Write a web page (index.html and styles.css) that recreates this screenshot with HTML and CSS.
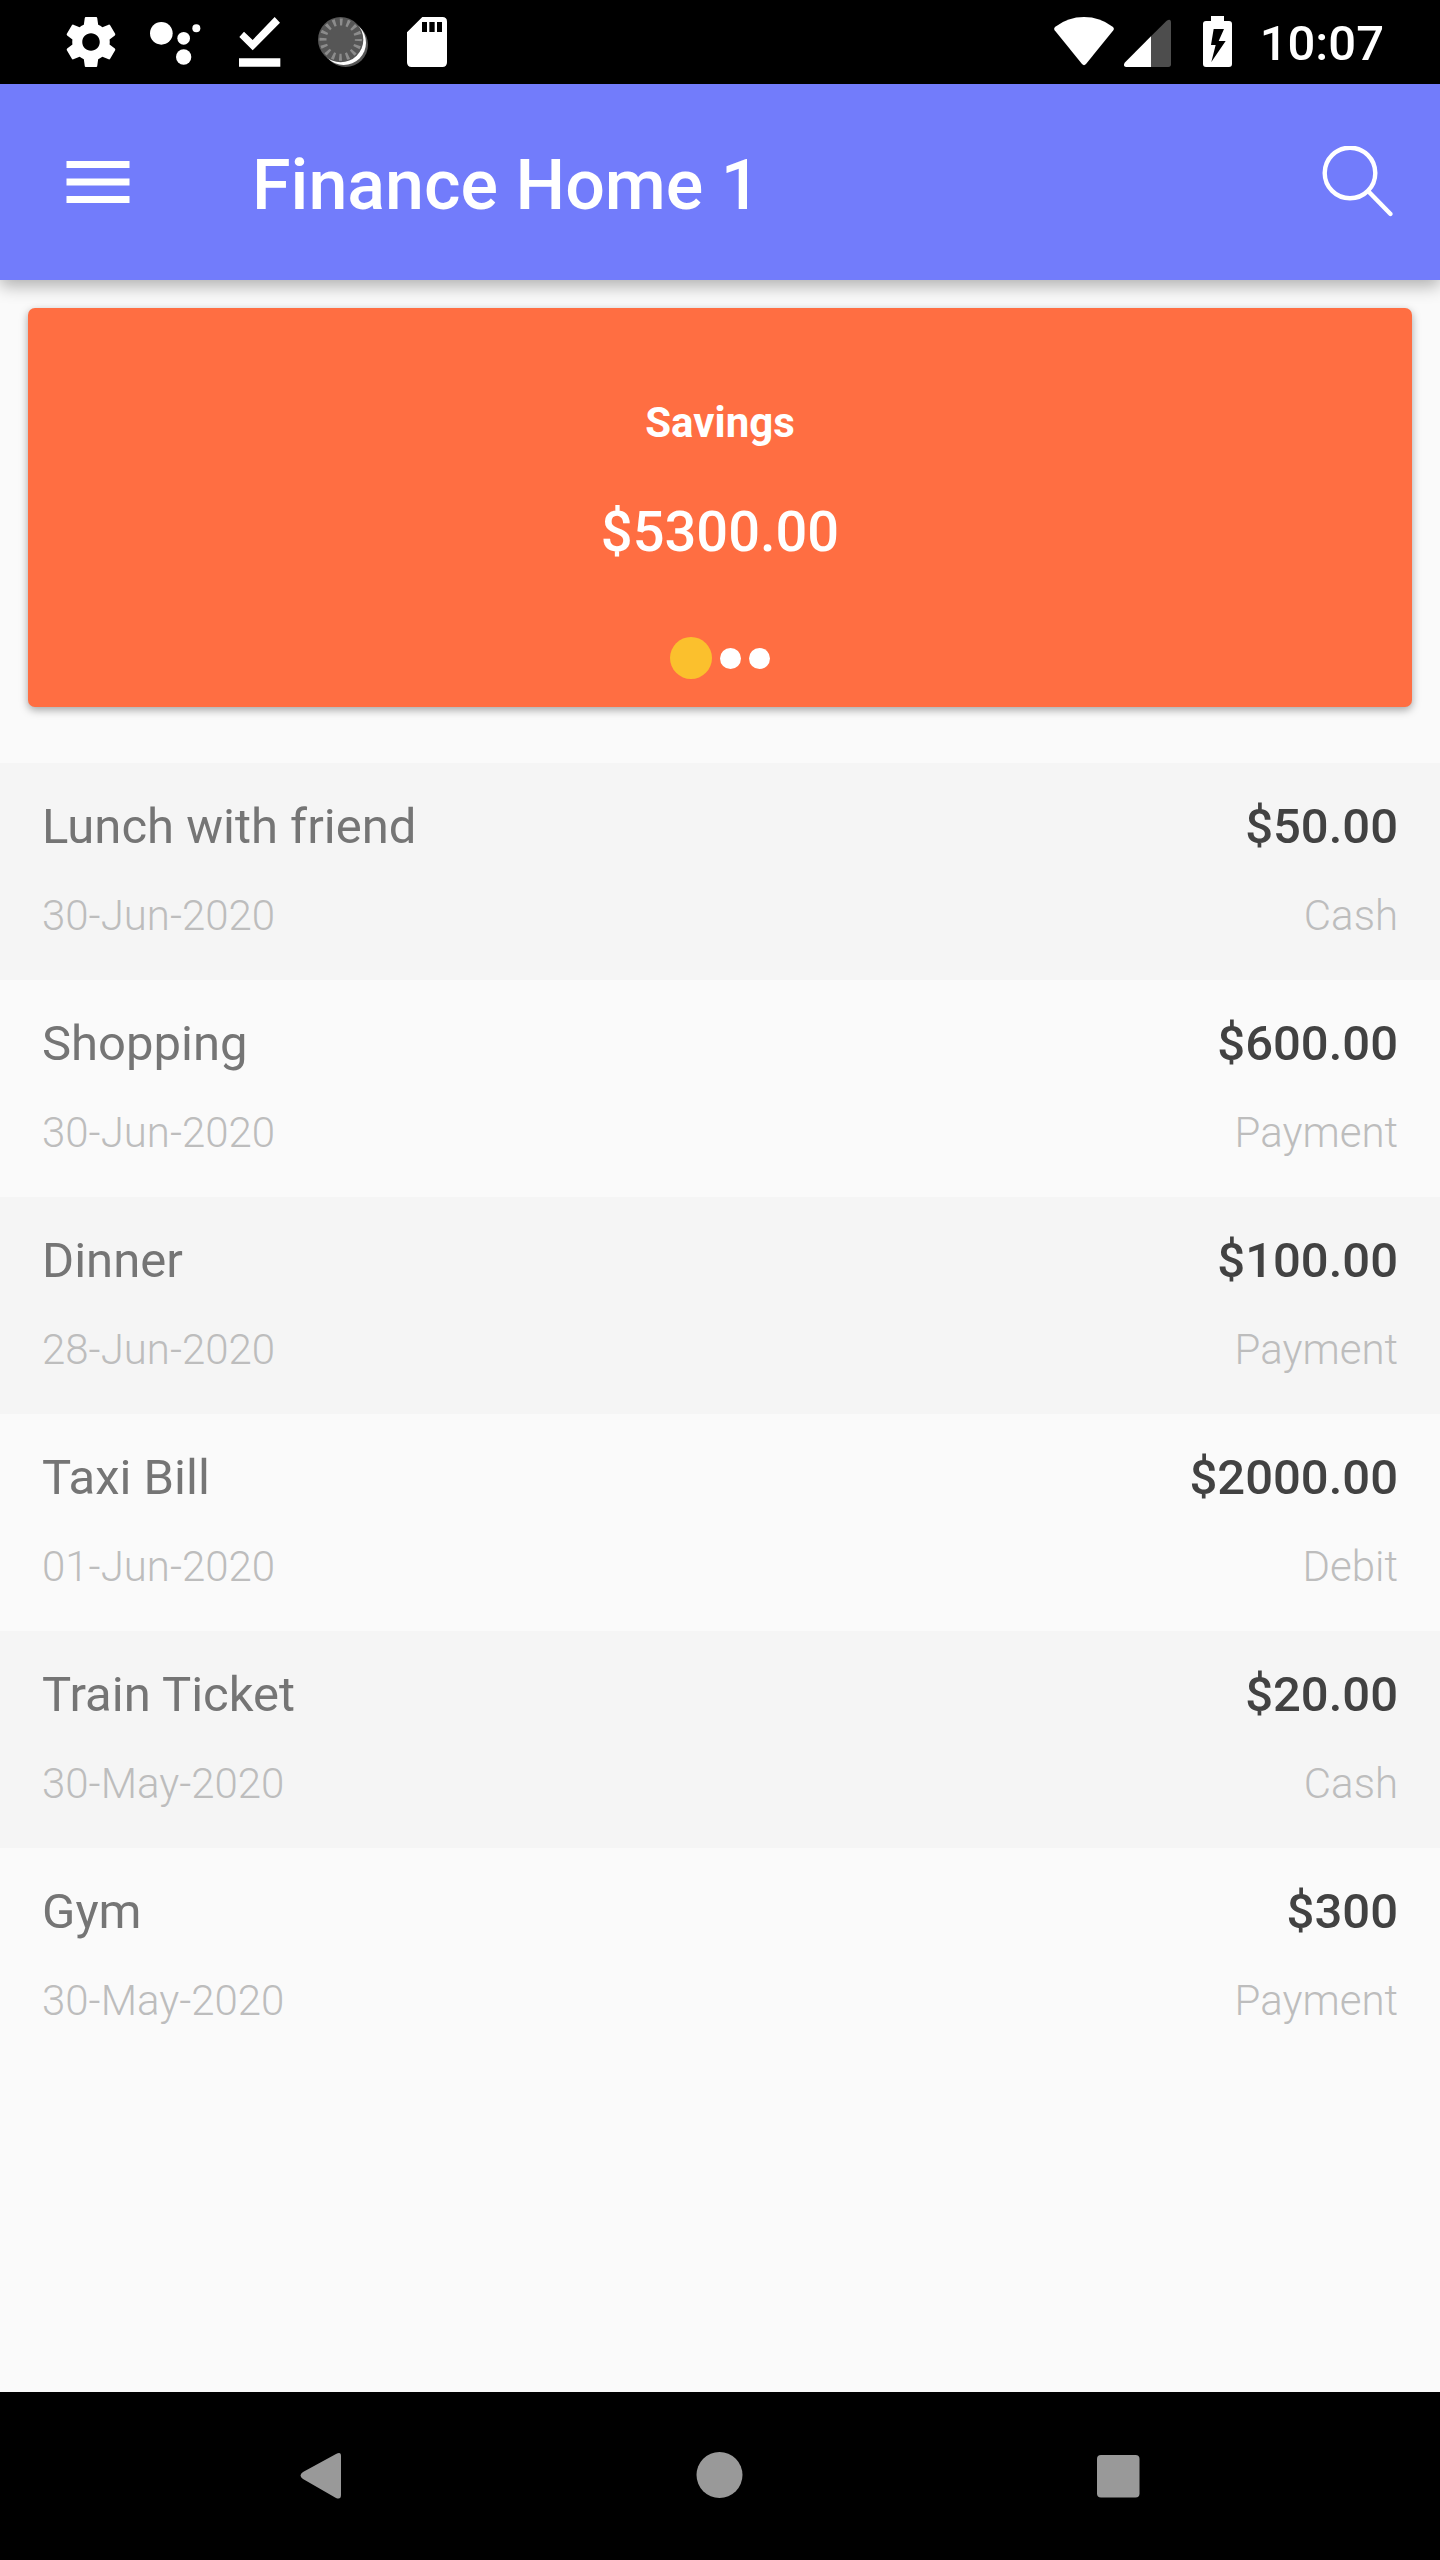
FILE: index.html
```html
<!DOCTYPE html>
<html lang="en">
<head>
<meta charset="utf-8">
<meta name="viewport" content="width=device-width, initial-scale=1">
<title>Finance Home 1</title>
<link rel="stylesheet" href="styles.css">
</head>
<body>
<div class="status-bar">
  <div class="status-group status-group-left">
    <svg class="status-icon" viewBox="0 0 24 24" aria-hidden="true"><path fill="#fff" d="M19.43 12.98c.04-.32.07-.64.07-.98s-.03-.66-.07-.98l2.11-1.65c.19-.15.24-.42.12-.64l-2-3.46c-.12-.22-.39-.3-.61-.22l-2.49 1c-.52-.4-1.08-.73-1.69-.98l-.38-2.65C14.46 2.18 14.25 2 14 2h-4c-.25 0-.46.18-.49.42l-.38 2.65c-.61.25-1.17.59-1.69.98l-2.49-1c-.23-.09-.49 0-.61.22l-2 3.46c-.13.22-.07.49.12.64l2.11 1.65c-.04.32-.07.65-.07.98s.03.66.07.98l-2.11 1.65c-.19.15-.24.42-.12.64l2 3.46c.12.22.39.3.61.22l2.49-1c.52.4 1.08.73 1.69.98l.38 2.65c.03.24.24.42.49.42h4c.25 0 .46-.18.49-.42l.38-2.65c.61-.25 1.17-.59 1.69-.98l2.49 1c.23.09.49 0 .61-.22l2-3.46c.12-.22.07-.49-.12-.64l-2.11-1.65zM12 15.5c-1.93 0-3.5-1.57-3.5-3.5s1.57-3.5 3.5-3.5 3.5 1.57 3.5 3.5-1.57 3.5-3.5 3.5z"/></svg>
    <svg class="status-icon" viewBox="315 36 180 180" aria-hidden="true"><g fill="#fff"><circle cx="364" cy="100" r="34"/><circle cx="431" cy="115" r="19"/><circle cx="469" cy="85" r="12"/><circle cx="431" cy="171" r="23"/></g></svg>
    <svg class="status-icon" viewBox="567 36 180 180" aria-hidden="true"><path fill="#fff" d="M704 51L720 68 638 151 598 111 612 95 638 120ZM597 175H721V200H597Z"/></svg>
    <svg class="status-icon" viewBox="819 36 180 180" aria-hidden="true"><circle cx="917" cy="134" r="67" fill="#565656"/><circle cx="911" cy="128" r="67" fill="#fff"/><circle cx="902" cy="119" r="68" fill="#565656"/><circle cx="902" cy="119" r="53" fill="none" stroke="#8c8c8c" stroke-width="21" stroke-dasharray="8 12.813" stroke-dashoffset="4"/></svg>
    <svg class="status-icon" viewBox="1071 36 180 180" aria-hidden="true"><path fill="#fff" fill-rule="evenodd" d="M1147 51H1207Q1221 51 1221 65V187Q1221 201 1207 201H1115Q1101 201 1101 187V97ZM1146 66V96H1161V66ZM1168 66V96H1184V66ZM1191 66V96H1206V66Z"/></svg>
  </div>
  <div class="status-group status-group-right">
    <div class="status-network">
      <svg class="status-icon" viewBox="72 36 180 180" aria-hidden="true"><path fill="#fff" d="M76 80Q114 51 162 51T248 80Q254 85 250 91L168 192Q162 199 156 192L74 91Q70 85 76 80Z"/></svg>
      <svg class="status-icon" viewBox="252 36 180 180" aria-hidden="true"><path fill="#4d4d4d" d="M363 109L410 62Q423 54 423 68V193Q423 201 415 201H363Z"/><path fill="#fff" d="M363 109V201H288Q278 198 284 188Z"/></svg>
    </div>
    <svg class="status-icon" viewBox="471 36 180 180" aria-hidden="true"><path fill="#fff" d="M543 48H582V63H597Q606 63 606 72V192Q606 201 597 201H528Q519 201 519 192V72Q519 63 528 63H543Z"/><path fill="#000" d="M551 87H582L566 123H587L544 186 557 135H543Z"/></svg>
    <time class="clock">10:07</time>
  </div>
</div>

<header class="app-bar">
  <button class="icon-button" type="button" aria-label="Open menu">
    <svg class="menu-icon" viewBox="0 0 24 24" aria-hidden="true"><path fill="#fff" d="M3 6h18v2H3zM3 11h18v2H3zM3 16h18v2H3z"/></svg>
  </button>
  <h1 class="app-title">Finance Home 1</h1>
  <button class="icon-button" type="button" aria-label="Search">
    <svg class="search-icon" viewBox="0 0 72 72" aria-hidden="true"><g fill="none" stroke="#fff" stroke-width="4.4" stroke-linecap="round"><circle cx="28" cy="27" r="25.3"/><path d="M47 46L68.5 68"/></g></svg>
  </button>
</header>

<main class="content">
  <section class="balance-card" aria-label="Account balance">
    <h2 class="balance-label">Savings</h2>
    <p class="balance-amount">$5300.00</p>
    <div class="pager">
      <button class="dot dot-active" type="button" aria-label="Savings" aria-current="true"></button>
      <button class="dot" type="button" aria-label="Second account"></button>
      <button class="dot" type="button" aria-label="Third account"></button>
    </div>
  </section>

  <ul class="transactions">
    <li class="transaction">
      <div class="line line-main"><span>Lunch with friend</span><span class="amount">$50.00</span></div>
      <div class="line line-meta"><span>30-Jun-2020</span><span>Cash</span></div>
    </li>
    <li class="transaction">
      <div class="line line-main"><span>Shopping</span><span class="amount">$600.00</span></div>
      <div class="line line-meta"><span>30-Jun-2020</span><span>Payment</span></div>
    </li>
    <li class="transaction">
      <div class="line line-main"><span>Dinner</span><span class="amount">$100.00</span></div>
      <div class="line line-meta"><span>28-Jun-2020</span><span>Payment</span></div>
    </li>
    <li class="transaction">
      <div class="line line-main"><span>Taxi Bill</span><span class="amount">$2000.00</span></div>
      <div class="line line-meta"><span>01-Jun-2020</span><span>Debit</span></div>
    </li>
    <li class="transaction">
      <div class="line line-main"><span>Train Ticket</span><span class="amount">$20.00</span></div>
      <div class="line line-meta"><span>30-May-2020</span><span>Cash</span></div>
    </li>
    <li class="transaction">
      <div class="line line-main"><span>Gym</span><span class="amount">$300</span></div>
      <div class="line line-meta"><span>30-May-2020</span><span>Payment</span></div>
    </li>
  </ul>
</main>

<nav class="system-nav" aria-label="System navigation">
  <button class="icon-button nav-button" type="button" aria-label="Back">
    <svg class="nav-icon" viewBox="0 0 84 84" aria-hidden="true"><path fill="#999" d="M24 38L57 20Q62 17 62 22V61Q62 66 57 64L24 45Q19 41.500 24 38Z"/></svg>
  </button>
  <button class="icon-button nav-button" type="button" aria-label="Home">
    <svg class="nav-icon" viewBox="0 0 84 84" aria-hidden="true"><circle cx="41.500" cy="41" r="23" fill="#999"/></svg>
  </button>
  <button class="icon-button nav-button" type="button" aria-label="Recent apps">
    <svg class="nav-icon" viewBox="0 0 84 84" aria-hidden="true"><rect x="20" y="21" width="42.500" height="42.500" rx="4" fill="#999"/></svg>
  </button>
</nav>
</body>
</html>
```
FILE: styles.css
```css
* {
  box-sizing: border-box;
}

body {
  display: flex;
  flex-direction: column;
  min-height: 100vh;
  margin: 0;
  background: #fafafa;
  font-family: Roboto, sans-serif;
}

h1,
h2,
p,
ul {
  margin: 0;
  padding: 0;
}

button {
  padding: 0;
  border: 0;
  background: none;
  cursor: pointer;
}

svg {
  display: block;
}

/* System status bar */
.status-bar {
  display: flex;
  justify-content: space-between;
  align-items: center;
  height: 84px;
  padding: 0 56px 0 61px;
  background: #000;
}

.status-group {
  display: flex;
  align-items: center;
}

.status-group-left {
  gap: 24px;
}

.status-group-right {
  gap: 13px;
}

.status-network {
  display: flex;
}

.status-icon {
  width: 60px;
  height: 60px;
}

.clock {
  padding-top: 4px;
  color: #fff;
  font-size: 49px;
  font-weight: 500;
  line-height: 58px;
}

/* App bar */
.app-bar {
  position: relative;
  display: flex;
  align-items: center;
  height: 196px;
  padding: 0 46px 0 56px;
  background: #727cfb;
  box-shadow: 0 6px 16px rgba(0, 0, 0, 0.3);
}

.app-title {
  flex: 1;
  padding: 6px 0 0 112px;
  color: #fff;
  font-size: 70px;
  font-weight: 500;
  line-height: 84px;
}

.menu-icon {
  width: 84px;
  height: 84px;
}

.search-icon {
  width: 72px;
  height: 72px;
}

/* Balance card */
.content {
  flex: 1;
}

.balance-card {
  display: flex;
  flex-direction: column;
  align-items: center;
  margin: 28px 28px 56px;
  padding: 87px 28px 28px;
  border-radius: 7px;
  background: #ff6e42;
  box-shadow: 0 3px 8px rgba(0, 0, 0, 0.35);
  color: #fff;
}

.balance-label {
  margin-bottom: 44px;
  font-size: 42px;
  font-weight: 700;
  line-height: 56px;
}

.balance-amount {
  margin-bottom: 68px;
  font-size: 56px;
  font-weight: 500;
  line-height: 74px;
}

.pager {
  display: flex;
  align-items: center;
  gap: 8px;
}

.dot {
  width: 21px;
  height: 21px;
  border-radius: 50%;
  background: #fff;
}

.dot-active {
  width: 42px;
  height: 42px;
  background: #fbc02d;
}

/* Transactions */
.transactions {
  list-style: none;
}

.transaction {
  display: flex;
  flex-direction: column;
  gap: 29px;
  padding: 31px 42px 36px;
}

.transaction:nth-child(odd) {
  background: #f5f5f5;
}

.line {
  display: flex;
  justify-content: space-between;
}

.line-main {
  color: #757575;
  font-size: 49px;
  line-height: 65px;
}

.amount {
  color: #424242;
  font-weight: 500;
}

.line-meta {
  color: #bdbdbd;
  font-size: 42px;
  font-weight: 300;
  line-height: 56px;
}

/* System navigation */
.system-nav {
  display: flex;
  justify-content: center;
  align-items: center;
  gap: 315px;
  height: 168px;
  background: #000;
}

.nav-icon {
  width: 84px;
  height: 84px;
}
```
